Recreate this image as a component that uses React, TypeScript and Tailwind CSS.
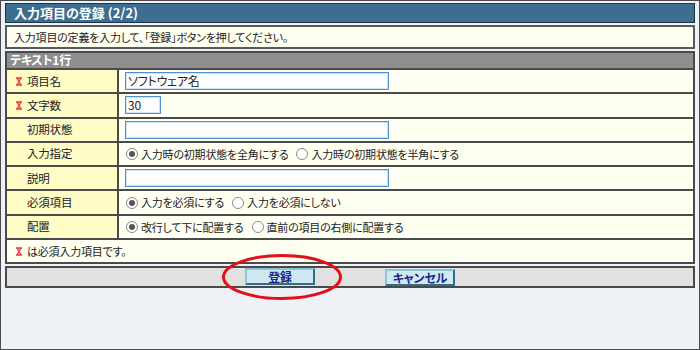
import type React from "react"

const font = "font-['Noto_Sans_CJK_JP','Noto_Sans',sans-serif] [font-feature-settings:'palt']"

function Mark(): React.JSX.Element {
  return (
    <svg width="8" height="9" viewBox="0 0 8 9" className="shrink-0">
      <path d="M1 1h6M1 8h6M2 1l4 7M6 1l-4 7" stroke="#e8383d" strokeWidth="1.4" fill="none" />
    </svg>
  )
}

function Radio({ checked, label }: { checked?: boolean; label: string }): React.JSX.Element {
  return (
    <span className="flex items-center gap-[3px] ml-[3px] mr-[5px]">
      <span className="w-[12px] h-[12px] rounded-full border border-[#8a8a8a] bg-white flex items-center justify-center">
        {checked && <span className="w-[6px] h-[6px] rounded-full bg-[#555]" />}
      </span>
      <span>{label}</span>
    </span>
  )
}

function TextBox({ width, value }: { width: string; value?: string }): React.JSX.Element {
  return (
    <div
      className={`${width} ml-[2px] h-[18px] border border-[#4f8fd6] bg-white shadow-[inset_0_0_0_1px_#cfe2f6] px-[2px] text-[12px] leading-[16px] text-[#222]`}
    >
      {value}
    </div>
  )
}

interface Row {
  label: string
  required?: boolean
  content: React.ReactNode
}

const rows: Row[] = [
  { label: "項目名", required: true, content: <TextBox width="w-[264px]" value="ソフトウェア名" /> },
  { label: "文字数", required: true, content: <TextBox width="w-[36px]" value="30" /> },
  { label: "初期状態", content: <TextBox width="w-[264px]" /> },
  {
    label: "入力指定",
    content: (
      <div className="flex">
        <Radio checked label="入力時の初期状態を全角にする" />
        <Radio label="入力時の初期状態を半角にする" />
      </div>
    ),
  },
  { label: "説明", content: <TextBox width="w-[264px]" /> },
  {
    label: "必須項目",
    content: (
      <div className="flex">
        <Radio checked label="入力を必須にする" />
        <Radio label="入力を必須にしない" />
      </div>
    ),
  },
  {
    label: "配置",
    content: (
      <div className="flex">
        <Radio checked label="改行して下に配置する" />
        <Radio label="直前の項目の右側に配置する" />
      </div>
    ),
  },
]

export default function App(): React.JSX.Element {
  return (
    <div
      className={`${font} w-[700px] h-[350px] border border-[#4a4a4a] bg-[#eef1f5] pt-[2px] pl-[4px] pr-[4px] flex flex-col text-[11px] tracking-[-0.2px] text-[#222]`}
    >
      <div className="h-[20px] bg-[#3b6e8f] border border-[#1c3445] text-white font-bold text-[13px] tracking-normal leading-[18px] pl-[8px]">
        入力項目の登録 (2/2)
      </div>
      <div className="mt-[2px] h-[24px] bg-[#fffff2] border-2 border-[#5a5a5a] pl-[7px] leading-[20px]">
        入力項目の定義を入力して、「登録」ボタンを押してください。
      </div>
      <div className="mt-[2px] border-2 border-[#4a4a4a] bg-[#fffff2]">
        <div className="h-[15px] bg-[#8e8e8e] border-b-2 border-[#4a4a4a] text-white font-bold text-[12px] leading-[13px] pl-[3px] box-content">
          テキスト1行
        </div>
        {rows.map((row) => (
          <div key={row.label} className="flex h-[24.3px] border-b-2 border-[#4a4a4a]">
            <div className="w-[112px] shrink-0 bg-[#fffcc6] border-r-2 border-[#4a4a4a] flex items-center pl-[8px] gap-[4px] text-[11.5px]">
              {row.required ? <Mark /> : <span className="w-[8px]" />}
              <span>{row.label}</span>
            </div>
            <div className="flex-1 flex items-center pl-[4px]">{row.content}</div>
          </div>
        ))}
        <div className="h-[22px] flex items-center pl-[8px] gap-[4px]">
          <Mark />
          <span>は必須入力項目です。</span>
        </div>
      </div>
      <div className="mt-[2px] h-[22px] bg-[#e1e1e1] border-2 border-[#4a4a4a] flex items-center justify-center gap-[70px]">
        <div className="relative">
          <button className="w-[70px] h-[17px] bg-[#cfe9f3] border-2 border-t-[#8fc3d8] border-l-[#8fc3d8] border-b-[#2f6f88] border-r-[#2f6f88] text-[#1b2a8a] font-bold text-[12px] leading-[13px]">
            登録
          </button>
          <svg
            width="122"
            height="48"
            viewBox="0 0 122 48"
            className="absolute left-[-24px] top-[-15px] pointer-events-none"
          >
            <ellipse cx="61" cy="24" rx="58.5" ry="21.5" fill="none" stroke="#e3101a" strokeWidth="3" />
          </svg>
        </div>
        <button className="w-[70px] h-[17px] bg-[#cfe9f3] border-2 border-t-[#8fc3d8] border-l-[#8fc3d8] border-b-[#2f6f88] border-r-[#2f6f88] text-[#1b2a8a] font-bold text-[12px] leading-[13px]">
          キャンセル
        </button>
      </div>
    </div>
  )
}
